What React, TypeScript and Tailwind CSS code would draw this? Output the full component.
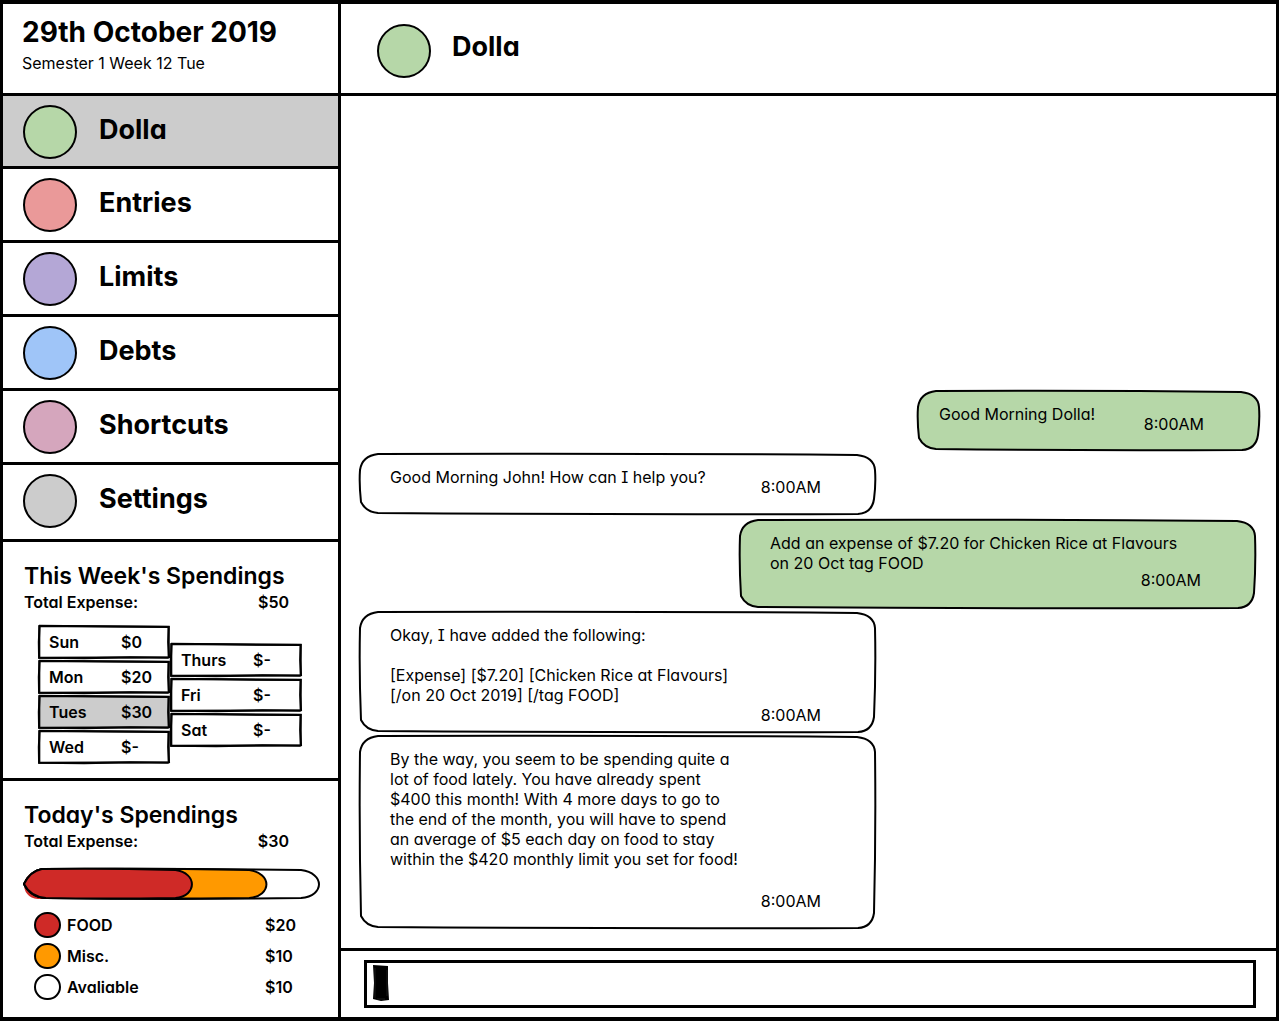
import React from "react";

const navItems = [
  { name: "Dolla", color: "bg-[#b6d7a8]", row: "h-[73px] bg-[#cccccc]", active: true },
  { name: "Entries", color: "bg-[#ea9999]", row: "h-[74px]" },
  { name: "Limits", color: "bg-[#b4a7d6]", row: "h-[74px]" },
  { name: "Debts", color: "bg-[#9fc5f8]", row: "h-[74px]" },
  { name: "Shortcuts", color: "bg-[#d5a6bd]", row: "h-[74px]" },
  { name: "Settings", color: "bg-[#cccccc]", row: "h-[77px]" },
];

const weekColumns = [
  [
    { day: "Sun", spent: "$0" },
    { day: "Mon", spent: "$20" },
    { day: "Tues", spent: "$30", today: true },
    { day: "Wed", spent: "$-" },
  ],
  [
    { day: "Thurs", spent: "$-" },
    { day: "Fri", spent: "$-" },
    { day: "Sat", spent: "$-" },
  ],
];

const categories = [
  { name: "FOOD", amount: "$20", color: "bg-[#cf2a27]" },
  { name: "Misc.", amount: "$10", color: "bg-[#ff9900]" },
  { name: "Avaliable", amount: "$10", color: "bg-white" },
];

/* Hand-drawn rectangle outline that stretches over its parent. */
function SketchFrame({ fill = "#ffffff" }: { fill?: string }) {
  return (
    <svg
      aria-hidden="true"
      className="pointer-events-none absolute inset-0 h-full w-full overflow-visible"
      viewBox="0 0 100 100"
      preserveAspectRatio="none"
    >
      <g fill="none" stroke="#000" strokeWidth="2">
        <path d="M1 3 L99 5 L99 95 L1 96 Z" fill={fill} vectorEffect="non-scaling-stroke" />
        <path d="M0.7 2 L40 4 L99 6 L98.6 50 L99.3 97" vectorEffect="non-scaling-stroke" />
        <path d="M1.2 3 L0.6 50 L0.8 96 L35 98 L70 95 L99 96" vectorEffect="non-scaling-stroke" />
      </g>
    </svg>
  );
}

/* Hand-drawn rounded outline; w and h are the bubble's nominal proportions. */
function BubbleFrame({ w, h, fill }: { w: number; h: number; fill: string }) {
  const d = [
    `M19 1 Q${w / 2} 0 ${w - 19} 2`,
    `Q${w - 2} 4 ${w - 1} 17`,
    `Q${w} ${h / 2} ${w - 2} ${h - 16}`,
    `Q${w - 4} ${h - 2} ${w - 18} ${h - 1}`,
    `Q${w / 2} ${h} 19 ${h - 2}`,
    `Q7 ${h - 3} 2 ${h - 13}`,
    `Q0 ${h / 2} 1 17`,
    "Q3 3 19 1 Z",
  ].join(" ");
  return (
    <svg
      aria-hidden="true"
      className="pointer-events-none absolute inset-0 h-full w-full overflow-visible"
      viewBox={`0 0 ${w} ${h}`}
      preserveAspectRatio="none"
    >
      <path d={d} fill={fill} stroke="#000" strokeWidth="2" vectorEffect="non-scaling-stroke" />
    </svg>
  );
}

type BubbleProps = {
  children: React.ReactNode;
  w: number;
  h: number;
  fill?: string;
  className: string;
};

function Bubble({ children, w, h, fill = "#ffffff", className }: BubbleProps) {
  return (
    <article className={`relative grid max-w-full pt-[14px] text-base leading-5 ${className}`}>
      <BubbleFrame w={w} h={h} fill={fill} />
      <div className="relative col-start-1 row-start-1">{children}</div>
      <time className="relative col-start-1 row-start-1 self-end justify-self-end">8:00AM</time>
    </article>
  );
}

function SpendingHeader({ title, total }: { title: string; total: string }) {
  return (
    <>
      <h2 className="text-[23px] leading-7 font-semibold">{title}</h2>
      <p className="flex justify-between pr-[49px] text-base leading-6 font-semibold">
        <span>Total Expense:</span>
        <span>{total}</span>
      </p>
    </>
  );
}

export default function App() {
  return (
    <div className="flex min-h-screen border-x-[3px] border-y-4 border-black bg-white font-['Inter',sans-serif] text-black [font-feature-settings:'cv11','cv08']">
      <aside className="flex w-[338px] shrink-0 flex-col border-r-[3px] border-black">
        <header className="h-[92px] border-b-[3px] border-black pt-3 pl-[19px]">
          <h1 className="text-[28px] leading-8 font-bold">29th October 2019</h1>
          <p className="text-base leading-[30px]">Semester 1 Week 12 Tue</p>
        </header>

        <nav>
          {navItems.map((item) => (
            <button
              key={item.name}
              type="button"
              aria-current={item.active ? "page" : undefined}
              className={`flex w-full items-start gap-[22px] border-b-[3px] border-black pt-[9px] pl-5 text-left ${item.row}`}
            >
              <span className={`size-[54px] shrink-0 rounded-full border-2 border-black ${item.color}`} />
              <span className="pt-[9px] text-[27px] leading-8 font-bold">{item.name}</span>
            </button>
          ))}
        </nav>

        <section className="h-[239px] border-b-[3px] border-black pt-5 pl-[21px]">
          <SpendingHeader title="This Week's Spendings" total="$50" />
          <div className="flex items-center pt-[11px] pl-[14px] text-base leading-5 font-semibold">
            {weekColumns.map((column, i) => (
              <ul key={i} className="flex w-[132px] flex-col gap-px">
                {column.map((entry) => (
                  <li key={entry.day} className="relative flex h-[34px] items-center pl-[11px]">
                    <SketchFrame fill={entry.today ? "#cccccc" : "#ffffff"} />
                    <span className="relative w-[72px]">{entry.day}</span>
                    <span className="relative">{entry.spent}</span>
                  </li>
                ))}
              </ul>
            ))}
          </div>
        </section>

        <section className="flex-1 pt-5 pl-[21px]">
          <SpendingHeader title="Today's Spendings" total="$30" />
          <svg
            role="img"
            aria-label="Food $20, miscellaneous $10, available $10"
            className="mt-[15px] block h-8 w-[296px] overflow-visible"
            viewBox="0 0 297 32"
          >
            <path d="M18 2 C-5 3 -5 30 14 31 L40 31 L40 1 Z" fill="#cf2a27" />
            <g stroke="#000" strokeWidth="2">
              <path d="M18 1 Q150 0 278 2 C302 5 302 28 278 30 Q150 32 22 30 C8 29 2 20 0 16 C2 12 7 3 18 1Z" fill="#fff" />
              <path d="M18 1 Q130 0 226 2 C249 5 249 28 226 30 Q130 31 22 30 C8 29 2 20 0 16 C2 12 7 3 18 1Z" fill="#ff9900" />
              <path d="M18 1 Q80 0 152 2 C174 5 174 28 152 30 Q80 31 22 30 C8 29 2 20 0 16 C2 12 7 3 18 1Z" fill="#cf2a27" />
            </g>
          </svg>
          <ul className="flex flex-col gap-[5px] pt-3 pl-[10px] text-base leading-[26px] font-semibold">
            {categories.map((category) => (
              <li key={category.name} className="flex items-center">
                <span className={`h-[26px] w-[27px] rounded-full border-2 border-black ${category.color}`} />
                <span className="w-[198px] pl-[6px]">{category.name}</span>
                <span className="pl-[6px]">{category.amount}</span>
              </li>
            ))}
          </ul>
        </section>
      </aside>

      <main className="flex min-w-0 flex-1 flex-col">
        <header className="flex h-[92px] items-start gap-[21px] border-b-[3px] border-black pt-5 pl-9">
          <span className="size-[54px] rounded-full border-2 border-black bg-[#b6d7a8]" />
          <h2 className="pt-[7px] text-[27px] leading-8 font-bold">Dolla</h2>
        </header>

        <div className="flex flex-1 flex-col justify-end gap-[2px] pr-4 pb-[19px] pl-[18px]">
          <Bubble w={343} h={61} fill="#b6d7a8" className="h-[61px] w-[343px] self-end pr-14 pb-[17px] pl-[22px]">
            <p>Good Morning Dolla!</p>
          </Bubble>
          <Bubble w={517} h={62} className="h-[62px] w-[517px] pr-[55px] pb-[18px] pl-[31px]">
            <p>Good Morning John! How can I help you?</p>
          </Bubble>
          <Bubble w={517} h={90} fill="#b6d7a8" className="mt-[2px] mr-1 h-[90px] w-[517px] self-end pr-[55px] pb-[19px] pl-[31px]">
            <p>
              Add an expense of $7.20 for Chicken Rice at Flavours
              <br />
              on 20 Oct tag FOOD
            </p>
          </Bubble>
          <Bubble w={517} h={122} className="h-[122px] w-[517px] pr-[55px] pb-2 pl-[31px]">
            <p>Okay, I have added the following:</p>
            <p className="pt-5">
              [Expense] [$7.20] [Chicken Rice at Flavours]
              <br />
              [/on 20 Oct 2019] [/tag FOOD]
            </p>
          </Bubble>
          <Bubble w={517} h={194} className="h-[194px] w-[517px] pr-[55px] pb-[18px] pl-[31px]">
            <p>
              By the way, you seem to be spending quite a<br />
              lot of food lately. You have already spent
              <br />
              $400 this month! With 4 more days to go to
              <br />
              the end of the month, you will have to spend
              <br />
              an average of $5 each day on food to stay
              <br />
              within the $420 monthly limit you set for food!
            </p>
          </Bubble>
        </div>

        <form className="border-t-[3px] border-black pt-[9px] pr-5 pb-[9px] pl-[23px]">
          <div className="relative h-12">
            <input
              type="text"
              aria-label="Message"
              className="h-full w-full border-[3px] border-black bg-white pl-8 text-base outline-none"
            />
            <svg aria-hidden="true" className="pointer-events-none absolute top-[5px] left-[9px] h-9 w-4" viewBox="0 0 16 36">
              <path d="M0 0 L15 1 L15 18 L16 35 L8 36 L0 34 L1 18Z" fill="#000" />
              <path d="M2 3 L2 33 M14 5 L14 31 M4 34 L12 34" stroke="#444" strokeWidth="0.4" fill="none" />
            </svg>
          </div>
        </form>
      </main>
    </div>
  );
}
